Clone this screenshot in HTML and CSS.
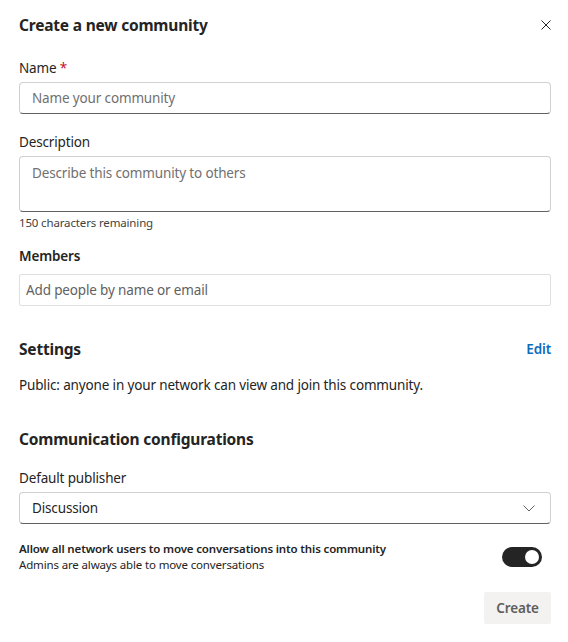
FILE: index.html
```html
<!DOCTYPE html>
<html lang="en" dir="ltr">
<head>
	<title>Create a new community</title>
	<meta charset="utf-8">
	<meta name="viewport" content="width=device-width,initial-scale=1">
	<link rel="stylesheet" href="styles.css">
</head>
<body>
	<div class="dialog">
		<div class="header">
			<h1 class="title">Create a new community</h1>
			<button class="close" aria-label="Close">
				<svg width="10" height="10" viewBox="0 0 10 10"><path d="M0.5 0.5 L9.5 9.5 M9.5 0.5 L0.5 9.5" stroke="#242424" stroke-width="1" fill="none"/></svg>
			</button>
		</div>

		<label class="label label-name">Name <span class="req">*</span></label>
		<div class="input">Name your community</div>

		<label class="label label-desc">Description</label>
		<div class="input textarea">Describe this community to others</div>
		<div class="hint">150 characters remaining</div>

		<label class="label label-members">Members</label>
		<div class="input picker">Add people by name or email</div>

		<div class="section-head settings-head">
			<h2 class="section-title">Settings</h2>
			<a class="edit" href="#">Edit</a>
		</div>
		<p class="text">Public: anyone in your network can view and join this community.</p>

		<div class="section-head comm-head">
			<h2 class="section-title">Communication configurations</h2>
		</div>

		<label class="label label-publisher">Default publisher</label>
		<div class="input dropdown">
			<span class="value">Discussion</span>
			<svg width="12" height="7" viewBox="0 0 12 7"><path d="M0.5 0.5 L6 6 L11.5 0.5" stroke="#616161" stroke-width="1" fill="none"/></svg>
		</div>

		<div class="switch-row">
			<div>
				<div class="switch-title">Allow all network users to move conversations into this community</div>
				<div class="switch-sub">Admins are always able to move conversations</div>
			</div>
			<span class="switch"><span class="knob"></span></span>
		</div>

		<div class="footer">
			<button class="create">Create</button>
		</div>
	</div>
</body>
</html>
```

FILE: styles.css
```css
body {
	margin: 0;
	background: #fff;
	color: #242424;
	font: 13.5px/20px "Noto Sans", sans-serif;
	letter-spacing: -0.15px;
}

.dialog {
	width: 532px;
	padding: 14px 17px 0 19px;
}

.header {
	display: flex;
	align-items: center;
	justify-content: space-between;
	height: 22px;
}

.title {
	margin: 0;
	font-size: 15.5px;
	line-height: 22px;
	font-weight: 700;
	letter-spacing: -0.2px;
}

.close {
	border: 0;
	background: none;
	padding: 0;
	display: flex;
	margin-right: 0;
}

.label {
	display: block;
	margin-bottom: 4px;
}

.label-name {
	margin-top: 22px;
}

.label-desc {
	margin-top: 18px;
}

.label-members {
	margin-top: 15px;
	margin-bottom: 8px;
	font-weight: 600;
}

.label-publisher {
	margin-top: 18px;
}

.req {
	color: #c50f1f;
}

.input {
	box-sizing: border-box;
	height: 32px;
	padding: 5px 12px;
	border: 1px solid #d1d1d1;
	border-bottom-color: #616161;
	border-radius: 4px;
	color: #707070;
}

.textarea {
	height: 56px;
	padding-top: 6px;
}

.picker {
	padding-left: 6px;
	border-color: #e0e0e0;
	border-radius: 2px;
	color: #616161;
}

.dropdown {
	display: flex;
	align-items: center;
	justify-content: space-between;
	color: #242424;
	padding-right: 15px;
}

.hint {
	margin-top: 3px;
	font-size: 11.5px;
	line-height: 16px;
	color: #424242;
}

.section-head {
	display: flex;
	align-items: center;
	justify-content: space-between;
	height: 22px;
}

.settings-head {
	margin-top: 32px;
}

.comm-head {
	margin-top: 33px;
}

.section-title {
	margin: 0;
	font-size: 15.5px;
	line-height: 22px;
	font-weight: 700;
	letter-spacing: -0.2px;
}

.edit {
	color: #0f6cbd;
	font-weight: 600;
	text-decoration: none;
}

.text {
	margin: 15px 0 0;
}

.switch-row {
	display: flex;
	align-items: center;
	justify-content: space-between;
	margin-top: 17px;
	font-size: 11.5px;
	line-height: 16px;
}

.switch-title {
	font-weight: 600;
}

.switch {
	display: flex;
	align-items: center;
	justify-content: flex-end;
	box-sizing: border-box;
	width: 40px;
	height: 20px;
	margin-right: 9px;
	padding: 0 3px;
	border-radius: 10px;
	background: #242424;
}

.knob {
	width: 14px;
	height: 14px;
	border-radius: 50%;
	background: #fff;
}

.footer {
	display: flex;
	justify-content: flex-end;
	margin-top: 19px;
}

.create {
	width: 67px;
	height: 32px;
	border: 0;
	border-radius: 2px;
	background: #f3f2f1;
	color: #605e5c;
	font: 600 13.5px/20px "Noto Sans", sans-serif;
	letter-spacing: -0.15px;
}
```
